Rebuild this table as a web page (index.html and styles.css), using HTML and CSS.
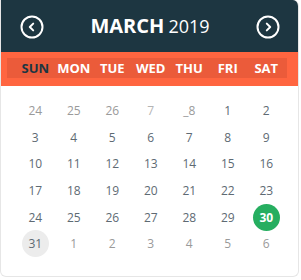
FILE: index.html
```html
<!DOCTYPE html>
<html>
<head>
<meta charset="utf-8">
<link rel="stylesheet" href="styles.css">
</head>
<body>
<div class="calendar">
  <div class="cal-head">
    <button class="nav" aria-label="Previous month">
      <svg width="24" height="24" viewBox="0 0 24 24"><circle cx="12" cy="12" r="10.5" fill="none" stroke="#fff" stroke-width="2"/><path d="M13.2 8.6 L9.8 12 L13.2 15.4" fill="none" stroke="#fff" stroke-width="2" stroke-linecap="round" stroke-linejoin="round"/></svg>
    </button>
    <div class="title"><span class="month">MARCH</span> <span class="year">2019</span></div>
    <button class="nav" aria-label="Next month">
      <svg width="24" height="24" viewBox="0 0 24 24"><circle cx="12" cy="12" r="10.5" fill="none" stroke="#fff" stroke-width="2"/><path d="M10.8 8.6 L14.2 12 L10.8 15.4" fill="none" stroke="#fff" stroke-width="2" stroke-linecap="round" stroke-linejoin="round"/></svg>
    </button>
  </div>
  <div class="weekbar">
    <div class="weekdays">
      <span class="wd sun">SUN</span><span class="wd">MON</span><span class="wd">TUE</span><span class="wd">WED</span><span class="wd">THU</span><span class="wd">FRI</span><span class="wd">SAT</span>
    </div>
  </div>
  <div class="days">
    <span class="d other">24</span><span class="d other">25</span><span class="d other">26</span><span class="d faint">7</span><span class="d other">_8</span><span class="d">1</span><span class="d">2</span>
    <span class="d">3</span><span class="d">4</span><span class="d">5</span><span class="d">6</span><span class="d">7</span><span class="d">8</span><span class="d">9</span>
    <span class="d">10</span><span class="d">11</span><span class="d">12</span><span class="d">13</span><span class="d">14</span><span class="d">15</span><span class="d">16</span>
    <span class="d">17</span><span class="d">18</span><span class="d">19</span><span class="d">20</span><span class="d">21</span><span class="d">22</span><span class="d">23</span>
    <span class="d">24</span><span class="d">25</span><span class="d">26</span><span class="d">27</span><span class="d">28</span><span class="d">29</span><span class="d"><span class="today">30</span></span>
    <span class="d"><span class="hover">31</span></span><span class="d other">1</span><span class="d other">2</span><span class="d other">3</span><span class="d other">4</span><span class="d other">5</span><span class="d other">6</span>
  </div>
</div>
</body>
</html>
```
FILE: styles.css
```css
html, body {
  margin: 0;
  padding: 0;
  background: #fff;
}

.calendar {
  width: 299px;
  height: 277px;
  box-sizing: border-box;
  font-family: "Open Sans", "Liberation Sans", sans-serif;
  background: #fff;
  border: 1px solid #e6e6e6;
  border-top: none;
  border-radius: 0 6px 6px 6px;
  overflow: hidden;
}

.cal-head {
  height: 52px;
  background: #1d3641;
  display: flex;
  align-items: center;
  justify-content: space-between;
  padding: 2px 18px 0 19px;
  box-sizing: border-box;
}

.nav {
  background: none;
  border: none;
  padding: 0;
  width: 24px;
  height: 24px;
  display: flex;
}

.title {
  color: #fff;
  line-height: 1;
  margin-top: -3px;
}

.month {
  font-size: 20px;
  font-weight: 700;
}

.year {
  font-size: 18px;
  font-weight: 400;
}

.weekbar {
  background: #ff6540;
  height: 34px;
  padding: 6px 11px 8px 6px;
  box-sizing: border-box;
}

.weekdays {
  height: 20px;
  background: #eb5b3a;
  display: grid;
  grid-template-columns: repeat(7, 38.5px);
  padding-left: 9px;
}

.wd {
  color: #fff;
  font-weight: 700;
  font-size: 13px;
  text-align: center;
  line-height: 20px;
}

.wd.sun {
  color: #1d3641;
}

.days {
  display: grid;
  grid-template-columns: repeat(7, 38.5px);
  grid-auto-rows: 26.6px;
  padding: 11.5px 0 0 15px;
}

.d {
  display: flex;
  align-items: center;
  justify-content: center;
  font-size: 12px;
  color: #5e6a73;
}

.d.other {
  color: #9a9a9a;
}

.d.faint {
  color: #b4b4b4;
}

.today,
.hover {
  width: 27px;
  height: 27px;
  border-radius: 50%;
  display: flex;
  align-items: center;
  justify-content: center;
}

.today {
  background: #26ae60;
  color: #fff;
  font-weight: 700;
}

.hover {
  background: #ececec;
  color: #5e6a73;
}
```
